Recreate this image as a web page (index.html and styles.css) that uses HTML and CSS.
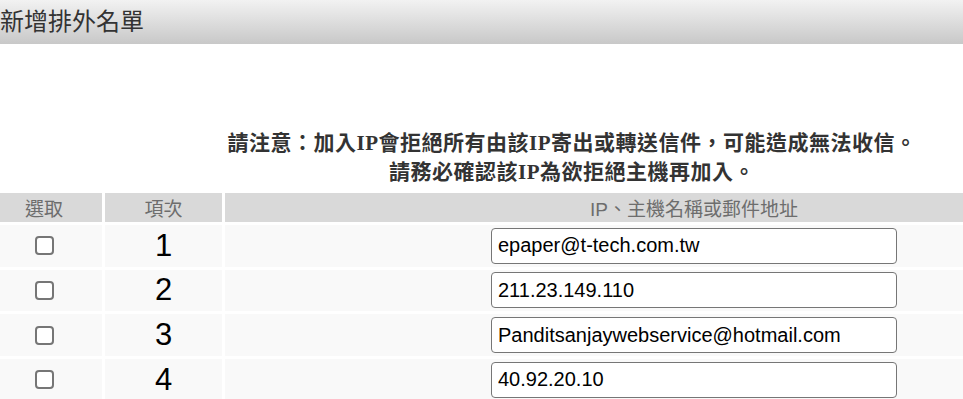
FILE: index.html
```html
<!DOCTYPE html>
<html>
<head>
    <meta charset="utf-8">
    <title>新增排外名單</title>
    <link rel="stylesheet" href="styles.css">
</head>
<body>
    <div class="titlebar">新增排外名單</div>

    <div class="wrap">
        <div class="notice">
            請注意：加入<span class="ip">IP</span>會拒絕所有由該<span class="ip">IP</span>寄出或轉送信件，可能造成無法收信。<br>
            請務必確認該<span class="ip">IP</span>為欲拒絕主機再加入。
        </div>

        <table class="list">
            <thead>
                <tr>
                    <th class="col-check">選取</th>
                    <th class="col-no">項次</th>
                    <th class="col-addr">IP、主機名稱或郵件地址</th>
                </tr>
            </thead>
            <tbody>
                <tr>
                    <td><input type="checkbox" class="pick"></td>
                    <td class="num">1</td>
                    <td><input type="text" class="addr" value="epaper@t-tech.com.tw"></td>
                </tr>
                <tr>
                    <td><input type="checkbox" class="pick"></td>
                    <td class="num">2</td>
                    <td><input type="text" class="addr" value="211.23.149.110"></td>
                </tr>
                <tr>
                    <td><input type="checkbox" class="pick"></td>
                    <td class="num">3</td>
                    <td><input type="text" class="addr" value="Panditsanjaywebservice@hotmail.com"></td>
                </tr>
                <tr>
                    <td><input type="checkbox" class="pick"></td>
                    <td class="num">4</td>
                    <td><input type="text" class="addr" value="40.92.20.10"></td>
                </tr>
            </tbody>
        </table>
    </div>
</body>
</html>
```

FILE: styles.css
```css
body {
    margin: 0;
    background-color: #fff;
    font-family: "Liberation Sans", "Noto Sans CJK TC", sans-serif;
    overflow: hidden;
}

.titlebar {
    height: 44px;
    line-height: 44px;
    font-size: 24px;
    color: #333;
    background: linear-gradient(to bottom, #f2f2f2, #c8c8c8);
}

.wrap {
    width: 1163px;
}

.notice {
    width: 1144px;
    margin-top: 83px;
    text-align: center;
    font-family: "Noto Sans CJK TC", sans-serif;
    font-size: 21px;
    font-weight: bold;
    line-height: 29px;
    letter-spacing: 0.5px;
    color: #333;
}

.notice .ip {
    font-family: "Liberation Serif", serif;
    line-height: 1;
}

.list {
    width: 1183px;
    margin: 5px 0 0 -17px;
    border-collapse: separate;
    border-spacing: 3px;
}

.list th {
    height: 29px;
    padding: 0;
    background-color: #d9d9d9;
    color: #6d6d6d;
    font-size: 19px;
    font-weight: normal;
}

.col-check {
    width: 116px;
}

.col-no {
    width: 117px;
}

.list td {
    height: 41.67px;
    padding: 0;
    background-color: #f9f9f9;
    text-align: center;
}

.list td.num {
    font-size: 31px;
    line-height: 34px;
    color: #000;
}

input.pick {
    appearance: none;
    width: 19px;
    height: 19px;
    margin: 0;
    border: 2px solid #767676;
    border-radius: 4px;
    background-color: #fff;
    vertical-align: middle;
}

input.addr {
    box-sizing: border-box;
    width: 406px;
    height: 36px;
    padding: 0 6px;
    border: 1px solid #767676;
    border-radius: 4px;
    font-family: "Liberation Sans", sans-serif;
    font-size: 20px;
    color: #000;
    vertical-align: middle;
}
```
